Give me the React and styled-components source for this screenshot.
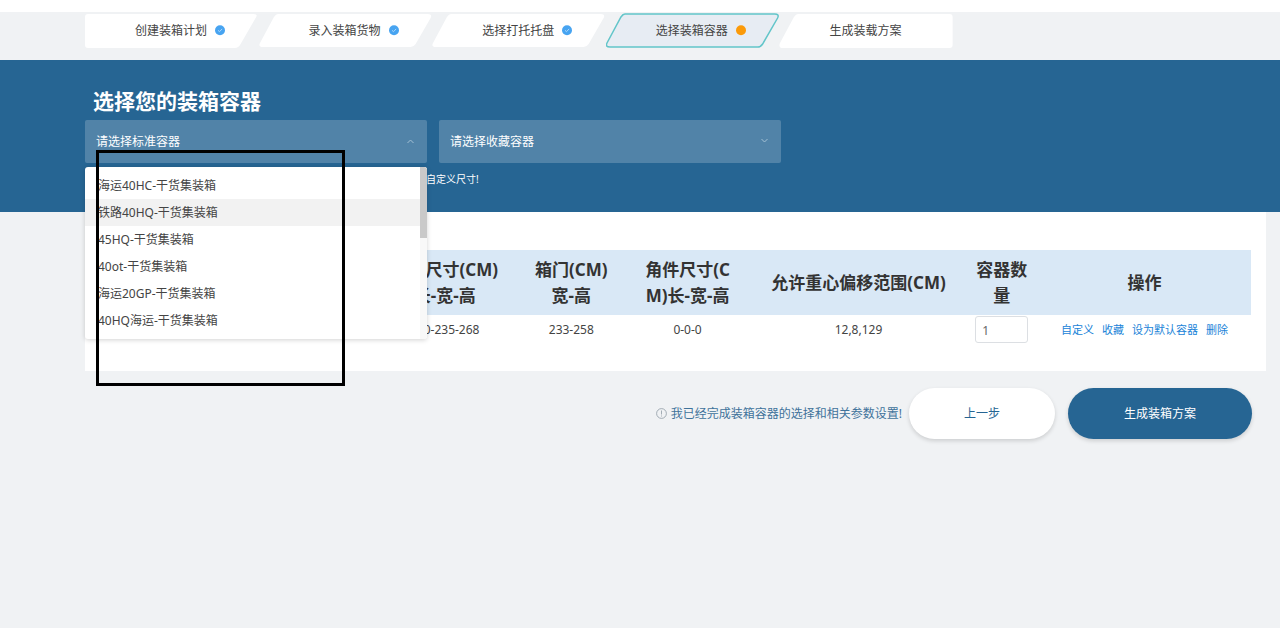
import React, { useState } from "react";
import styled, { createGlobalStyle, css } from "styled-components";

const GlobalStyle = createGlobalStyle`
  :root {
    --main-color: #266593;
    --page-color: #f0f2f4;
    --head-color: #d9e8f6;
    --link-color: #2083d8;
    --text-color: #444;
    --white-color: #fff;
  }

  * {
    box-sizing: border-box;
  }

  body {
    margin: 0;
    background-color: var(--white-color);
    color: var(--text-color);
    font-family: "Noto Sans", "Noto Sans CJK SC", sans-serif;
    font-size: 12px;
    line-height: 18px;
  }

  button,
  input,
  select {
    font: inherit;
    color: inherit;
  }
`;

const Page = styled.main`
  min-height: calc(100vh - 24px);
  margin: 12px 0;
  background-color: var(--page-color);
`;

const Steps = styled.nav`
  display: grid;
  grid-template-columns: repeat(5, 1fr);
  max-width: 953px;
  padding: 1px 0 12px 85px;
`;

const StepButton = styled.button`
  position: relative;
  display: flex;
  align-items: center;
  gap: 8px;
  height: 35px;
  padding: 0 0 0 50px;
  border: 0;
  background: none;
  cursor: pointer;
`;

const StepShape = styled.svg`
  position: absolute;
  inset: 0;
  width: 100%;
  height: 100%;
  fill: ${({ $active }) => ($active ? "#e7ecf3" : "#fff")};
  stroke: ${({ $active }) => ($active ? "#62c5c9" : "none")};
  stroke-width: 1.5;
`;

const StepText = styled.span`
  position: relative;
`;

const StepMark = styled.svg`
  position: relative;
  width: 11px;
  height: 11px;
`;

const Hero = styled.section`
  min-height: 152px;
  padding: 26px 14px 24px 85px;
  background-color: var(--main-color);
  color: var(--white-color);
`;

const Title = styled.h1`
  margin: 0 0 4px;
  padding-left: 8px;
  font-size: 21px;
  line-height: 30px;
  font-weight: 700;
`;

const Fields = styled.div`
  display: grid;
  grid-template-columns: repeat(2, 1fr);
  gap: 12px;
  max-width: 696px;
`;

const Field = styled.div`
  position: relative;
`;

const Select = styled.select`
  display: block;
  width: 100%;
  height: 43px;
  padding: 0 11px;
  appearance: none;
  border: 0;
  border-radius: 2px;
  background-color: rgba(255, 255, 255, 0.2);
  cursor: pointer;

  option {
    color: var(--text-color);
  }
`;

const Arrow = styled.svg`
  position: absolute;
  top: 16px;
  right: 12px;
  width: 9px;
  height: 9px;
  fill: none;
  stroke: #a3c0d4;
  pointer-events: none;
  ${({ $open }) =>
    $open &&
    css`
      top: 17px;
      transform: rotate(180deg);
    `}
`;

const Menu = styled.div`
  position: absolute;
  top: 47px;
  left: 0;
  right: 0;
  z-index: 1;
  display: flex;
  overflow: hidden;
  border-radius: 3px;
  background-color: var(--white-color);
  box-shadow: 0 1px 5px rgba(0, 0, 0, 0.18);
`;

const Options = styled.ul`
  flex: 1;
  margin: 0;
  padding: 5px 0;
  list-style: none;
`;

const Option = styled.li`
  padding-left: 13px;
  line-height: 27px;
  color: var(--text-color);
  background-color: ${({ $hover }) => ($hover ? "#f2f2f2" : "transparent")};
  cursor: pointer;
`;

const ScrollTrack = styled.div`
  width: 7px;
  background-color: #f8f8f8;
`;

const ScrollThumb = styled.div`
  height: 71px;
  background-color: #c9c9c9;
`;

const Outline = styled.div`
  position: absolute;
  top: 30px;
  left: 11px;
  z-index: 2;
  width: 249px;
  height: 236px;
  border: 3px solid #000;
  pointer-events: none;
`;

const Hint = styled.p`
  margin: 7px 0 0;
  padding-left: 11px;
  font-size: 10px;
`;

const Panel = styled.section`
  margin: 0 14px 0 85px;
  padding: 38px 15px 27px;
  background-color: var(--white-color);
`;

const Table = styled.table`
  width: 100%;
  table-layout: fixed;
  border-collapse: collapse;
  text-align: center;
`;

const HeadCell = styled.th`
  height: 65px;
  padding: 0;
  background-color: var(--head-color);
  color: #333;
  font-size: 17px;
  line-height: 26px;
  white-space: pre-line;
`;

const Cell = styled.td`
  height: 29px;
  padding: 0;
`;

const CountInput = styled.input`
  display: block;
  width: 53px;
  height: 27px;
  margin: 0 auto;
  padding: 2px 6px 0;
  border: 1px solid #dcdfe3;
  border-radius: 3px;
  background-color: var(--white-color);
  color: #666;
`;

const Links = styled.div`
  display: flex;
  justify-content: center;
  gap: 8px;
  font-size: 11px;
`;

const Link = styled.a`
  color: var(--link-color);
  text-decoration: none;
`;

const Footer = styled.footer`
  display: flex;
  align-items: center;
  justify-content: flex-end;
  padding: 17px 28px 0 85px;
`;

const Notice = styled.p`
  display: flex;
  align-items: center;
  gap: 4px;
  margin: 0 7px 0 0;
  color: #3f739b;

  svg {
    width: 11px;
    height: 11px;
    fill: none;
    stroke: #8f9ba5;
    stroke-width: 0.8;
  }
`;

const PillButton = styled.button`
  width: ${({ $primary }) => ($primary ? "184px" : "146px")};
  height: 51px;
  border: 0;
  border-radius: 26px;
  background-color: ${({ $primary }) => ($primary ? "var(--main-color)" : "var(--white-color)")};
  color: ${({ $primary }) => ($primary ? "var(--white-color)" : "var(--main-color)")};
  box-shadow: 0 2px 4px rgba(0, 0, 0, 0.15);
  cursor: pointer;

  & + & {
    margin-left: 13px;
  }
`;

const shapes = {
  first: "M3 1H169Q174 1 171 5L156 31Q154 35 150 35H3Q0 35 0 32V4Q0 1 3 1Z",
  middle: "M19 1H169Q174 1 172 5L157 31Q155 34 152 34H4Q-1 34 1 30L15 4Q17 1 19 1Z",
  last: "M19 1H171Q174 1 174 4V32Q174 35 171 35H4Q-1 35 1 30L15 4Q17 1 19 1Z",
};

const steps = [
  { text: "创建装箱计划", shape: "first", state: "done" },
  { text: "录入装箱货物", shape: "middle", state: "done" },
  { text: "选择打托托盘", shape: "middle", state: "done" },
  { text: "选择装箱容器", shape: "middle", state: "active" },
  { text: "生成装载方案", shape: "last" },
];

const containers = ["海运40HC-干货集装箱", "铁路40HQ-干货集装箱", "45HQ-干货集装箱", "40ot-干货集装箱", "海运20GP-干货集装箱", "40HQ海运-干货集装箱"];

const columns = [
  { title: "容器名称", width: "23.5%" },
  { title: "内部尺寸(CM)\n长-宽-高", width: "12.9%" },
  { title: "箱门(CM)\n宽-高", width: "9.1%" },
  { title: "角件尺寸(C\nM)长-宽-高", width: "11.1%" },
  { title: "允许重心偏移范围(CM)", width: "18.6%" },
  { title: "容器数\n量", width: "6.3%" },
  { title: "操作", width: "18.5%" },
];

const actions = ["自定义", "收藏", "设为默认容器", "删除"];

function Step({ text, shape, state }) {
  const active = state === "active";
  return (
    <StepButton type="button" aria-current={active ? "step" : undefined}>
      <StepShape $active={active} viewBox="0 0 174 35" preserveAspectRatio="none" aria-hidden="true">
        <path d={shapes[shape]} />
      </StepShape>
      <StepText>{text}</StepText>
      {state && (
        <StepMark viewBox="0 0 11 11" aria-hidden="true">
          <circle cx="5" cy="5.2" r="5" fill={active ? "#fb9a09" : "#47a4f1"} />
          {!active && <path d="M3 5.3l1.5 1.4 2.6-2.8" fill="none" stroke="#b5dbfb" strokeWidth="0.9" />}
        </StepMark>
      )}
    </StepButton>
  );
}

function SelectField({ label, value, onChange, options, open, children }) {
  return (
    <Field>
      <Select aria-label={label} value={value} onChange={(e) => onChange(e.target.value)}>
        <option value="">{label}</option>
        {options.map((name) => (
          <option key={name}>{name}</option>
        ))}
      </Select>
      <Arrow $open={open} viewBox="0 0 9 9" aria-hidden="true">
        <path d="M1.5 3l3 3 3-3" />
      </Arrow>
      {children}
    </Field>
  );
}

export default function App() {
  const [standard, setStandard] = useState("");
  const [favorite, setFavorite] = useState("");
  const [hovered, setHovered] = useState(containers[1]);
  const [count, setCount] = useState("1");

  return (
    <>
      <GlobalStyle />
      <Page>
        <Steps>
          {steps.map((step) => (
            <Step key={step.text} {...step} />
          ))}
        </Steps>

        <Hero>
          <Title>选择您的装箱容器</Title>
          <Fields>
            <SelectField label="请选择标准容器" value={standard} onChange={setStandard} options={containers} open>
              <Menu>
                <Options role="listbox" aria-label="标准容器">
                  {containers.map((name) => (
                    <Option key={name} role="option" aria-selected={name === standard} $hover={name === hovered} onMouseEnter={() => setHovered(name)} onClick={() => setStandard(name)}>
                      {name}
                    </Option>
                  ))}
                </Options>
                <ScrollTrack>
                  <ScrollThumb />
                </ScrollTrack>
              </Menu>
              <Outline />
            </SelectField>
            <SelectField label="请选择收藏容器" value={favorite} onChange={setFavorite} options={[]} />
          </Fields>
          <Hint>请根据实际需求选择装箱容器，如果没有合适的容器，可在下方列表中进行自定义尺寸!</Hint>
        </Hero>

        <Panel>
          <Table>
            <colgroup>
              {columns.map(({ title, width }) => (
                <col key={title} width={width} />
              ))}
            </colgroup>
            <thead>
              <tr>
                {columns.map(({ title }) => (
                  <HeadCell key={title} scope="col">
                    {title}
                  </HeadCell>
                ))}
              </tr>
            </thead>
            <tbody>
              <tr>
                <Cell>海运40HC</Cell>
                <Cell>590-235-268</Cell>
                <Cell>233-258</Cell>
                <Cell>0-0-0</Cell>
                <Cell>12,8,129</Cell>
                <Cell>
                  <CountInput type="text" inputMode="numeric" aria-label="容器数量" value={count} onChange={(e) => setCount(e.target.value)} />
                </Cell>
                <Cell>
                  <Links>
                    {actions.map((name) => (
                      <Link key={name} href="#">
                        {name}
                      </Link>
                    ))}
                  </Links>
                </Cell>
              </tr>
            </tbody>
          </Table>
        </Panel>

        <Footer>
          <Notice>
            <svg viewBox="0 0 11 11" aria-hidden="true">
              <circle cx="5.5" cy="5.5" r="4.9" />
              <path d="M5.5 2.5v4M5.5 7.5v1" />
            </svg>
            我已经完成装箱容器的选择和相关参数设置!
          </Notice>
          <PillButton type="button">上一步</PillButton>
          <PillButton type="button" $primary>
            生成装箱方案
          </PillButton>
        </Footer>
      </Page>
    </>
  );
}
